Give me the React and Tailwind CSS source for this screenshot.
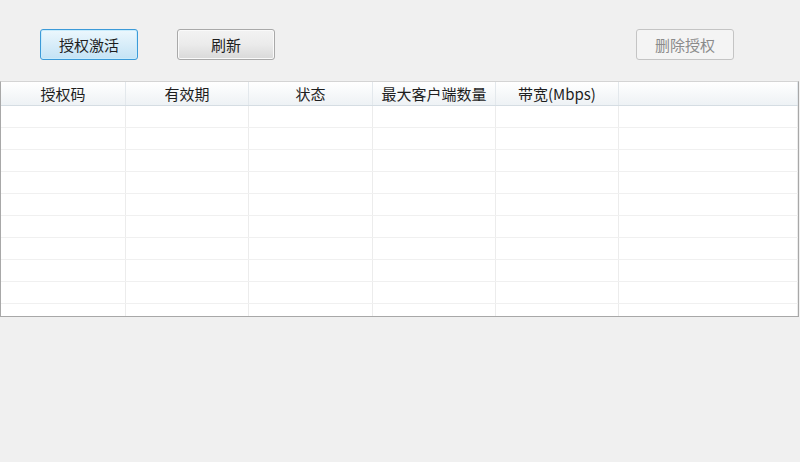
const columns = ["授权码", "有效期", "状态", "最大客户端数量", "带宽(Mbps)", ""];
const rows = Array.from({ length: 10 });

export default function App() {
  return (
    <div
      className="w-[800px] h-[462px] bg-[#f0f0f0] overflow-hidden text-[15px] text-[#1e1e1e]"
      style={{ fontFamily: '"Noto Sans CJK SC", "Noto Sans", sans-serif' }}
    >
      {/* toolbar */}
      <div className="flex h-[81px] pt-[29px] pl-[40px]">
        <button className="w-[98px] h-[31px] rounded-[3px] border border-[#3c9ad8] bg-gradient-to-b from-[#ecf7fd] to-[#c4e3f5] shadow-[inset_0_0_0_1px_#c9ecfc] leading-none">
          授权激活
        </button>
        <button className="ml-[39px] w-[98px] h-[31px] rounded-[3px] border border-[#a9a9a9] bg-gradient-to-b from-[#f3f3f3] via-[#ebebeb] to-[#d9d9d9] shadow-[inset_0_0_0_1px_#fafafa] leading-none">
          刷新
        </button>
        <button className="ml-[361px] w-[98px] h-[31px] rounded-[3px] border border-[#c4c4c4] bg-[#f4f4f4] text-[#8b8b8b] leading-none">
          删除授权
        </button>
      </div>

      {/* table */}
      <div className="w-[799px] h-[236px] border border-[#a8a8a8] border-t-[#d4d4d4] bg-white overflow-hidden">
        <div className="grid grid-cols-[125px_123px_124px_123px_123px_1fr] h-[24px] bg-gradient-to-b from-[#ffffff] to-[#eef2f5] border-b border-[#d5dde3]">
          {columns.map((c, i) => (
            <div
              key={i}
              className="flex items-center justify-center border-r border-[#e3e8ec] leading-none"
            >
              {c}
            </div>
          ))}
        </div>
        {rows.map((_, r) => (
          <div
            key={r}
            className="grid grid-cols-[125px_123px_124px_123px_123px_1fr] h-[22px] border-b border-[#f0f0f0]"
          >
            {columns.map((_, i) => (
              <div key={i} className="border-r border-[#ececec]" />
            ))}
          </div>
        ))}
      </div>
    </div>
  );
}
